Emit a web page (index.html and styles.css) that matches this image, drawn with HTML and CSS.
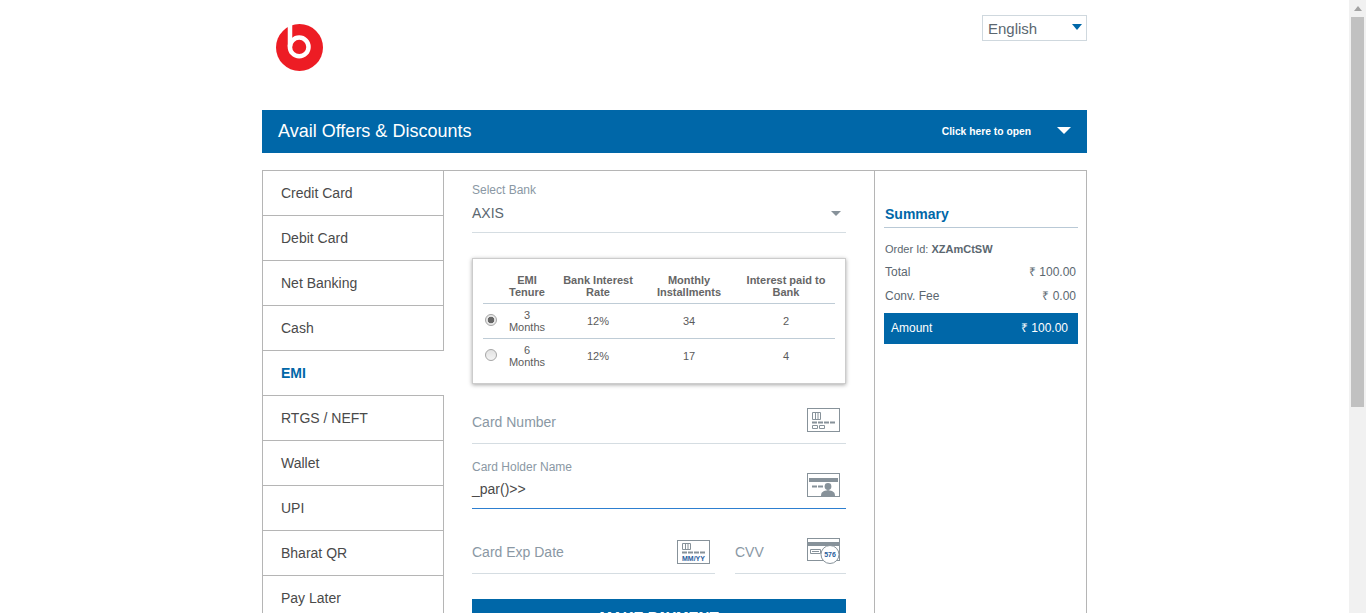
FILE: index.html
```html
<!DOCTYPE html>
<html lang="en">
<head>
  <meta charset="UTF-8">
  <title>Payment</title>
  <link rel="stylesheet" href="styles.css">
</head>
<body>
  <div class="page">
    <div class="main">
      <div class="container">

        <div class="top">
          <svg class="logo" width="47" height="47" viewBox="0 0 48 48">
            <circle cx="24" cy="24" r="24" fill="#ed1c24"/>
            <circle cx="23.7" cy="23.4" r="9.5" fill="none" stroke="#fff" stroke-width="4.6"/>
            <rect x="12" y="1" width="4.6" height="22" fill="#fff"/>
          </svg>
          <div class="lang">
            <span>English</span>
            <i class="caret"></i>
          </div>
        </div>

        <div class="offers">
          <h1>Avail Offers &amp; Discounts</h1>
          <div class="offers-right">
            <span>Click here to open</span>
            <i class="caret-white"></i>
          </div>
        </div>

        <div class="content">
          <ul class="tabs">
            <li>Credit Card</li>
            <li>Debit Card</li>
            <li>Net Banking</li>
            <li>Cash</li>
            <li class="active">EMI</li>
            <li>RTGS / NEFT</li>
            <li>Wallet</li>
            <li>UPI</li>
            <li>Bharat QR</li>
            <li>Pay Later</li>
          </ul>

          <div class="form">
            <div class="bank">
              <label>Select Bank</label>
              <div class="bank-value">
                <span>AXIS</span>
                <i class="caret-gray"></i>
              </div>
            </div>

            <div class="emi-box">
              <table class="emi">
                <thead>
                  <tr>
                    <th class="c-radio"></th>
                    <th class="c-tenure">EMI<br>Tenure</th>
                    <th class="c-rate">Bank Interest Rate</th>
                    <th class="c-month">Monthly Installments</th>
                    <th class="c-paid">Interest paid to Bank</th>
                  </tr>
                </thead>
                <tbody>
                  <tr>
                    <td><i class="radio checked"></i></td>
                    <td>3<br>Months</td>
                    <td>12%</td>
                    <td>34</td>
                    <td>2</td>
                  </tr>
                  <tr>
                    <td><i class="radio"></i></td>
                    <td>6<br>Months</td>
                    <td>12%</td>
                    <td>17</td>
                    <td>4</td>
                  </tr>
                </tbody>
              </table>
            </div>

            <div class="field field-number">
              <span class="placeholder">Card Number</span>
              <svg width="33" height="24" viewBox="0 0 33 24" fill="none">
                <rect x="0.5" y="0.5" width="32" height="23" stroke="#87929a"/>
                <path d="M5.5 4.5h8v7h-8zM8.5 4.5v7M11 4.5v7" stroke="#87929a"/>
                <path d="M5 14.5h5M11 14.5h5M17 14.5h5M23 14.5h5" stroke="#87929a" stroke-width="2"/>
                <path d="M5.5 17.5h5v3h-5zM12.5 17.5h5v3h-5z" stroke="#87929a"/>
              </svg>
            </div>

            <div class="field field-name">
              <label>Card Holder Name</label>
              <div class="field-row">
                <span class="value">_par()&gt;&gt;</span>
                <svg width="33" height="24" viewBox="0 0 33 24" fill="none">
                  <rect x="0.5" y="0.5" width="32" height="23" stroke="#87929a"/>
                  <rect x="2" y="5" width="29" height="4" fill="#87929a"/>
                  <path d="M5 13.5h5M11 13.5h5" stroke="#87929a" stroke-width="2"/>
                  <circle cx="21" cy="13.5" r="3.4" fill="#87929a"/>
                  <path d="M14 23c0-4 2-5 7-6 5 1 7 2 7 6z" fill="#87929a"/>
                </svg>
              </div>
            </div>

            <div class="split">
              <div class="field field-exp">
                <span class="placeholder">Card Exp Date</span>
                <svg width="33" height="24" viewBox="0 0 33 24" fill="none">
                  <rect x="0.5" y="0.5" width="32" height="23" stroke="#87929a"/>
                  <path d="M5.5 3.5h8v6h-8zM8.5 3.5v6M11 3.5v6" stroke="#87929a"/>
                  <path d="M5 12.5h5M11 12.5h5M17 12.5h5M23 12.5h5" stroke="#87929a" stroke-width="2"/>
                  <text x="16.5" y="21" class="icon-text" text-anchor="middle">MM/YY</text>
                </svg>
              </div>
              <div class="field field-cvv">
                <span class="placeholder">CVV</span>
                <svg width="33" height="26" viewBox="0 0 33 26" fill="none">
                  <rect x="0.5" y="0.5" width="32" height="22" stroke="#87929a"/>
                  <rect x="1" y="4" width="31" height="4" fill="#87929a"/>
                  <path d="M3.5 11.5h10v4h-10zM5 13.5h7" stroke="#87929a"/>
                  <circle cx="23" cy="16.5" r="9" fill="#fff" stroke="#87929a"/>
                  <text x="23" y="19" class="icon-text" text-anchor="middle">576</text>
                </svg>
              </div>
            </div>

            <button class="pay">MAKE PAYMENT</button>
          </div>

          <div class="summary">
            <h2>Summary</h2>
            <div class="order">Order Id: <b>XZAmCtSW</b></div>
            <div class="line"><span>Total</span><span>₹ 100.00</span></div>
            <div class="line"><span>Conv. Fee</span><span>₹ 0.00</span></div>
            <div class="amount"><span>Amount</span><span>₹ 100.00</span></div>
          </div>
        </div>

      </div>
    </div>

    <div class="scrollbar">
      <i class="scroll-arrow"></i>
      <div class="scroll-thumb"></div>
    </div>
  </div>
</body>
</html>
```

FILE: styles.css
```css
* {
  box-sizing: border-box;
}
html, body {
  margin: 0;
  padding: 0;
  height: 100%;
  overflow: hidden;
}
body {
  background: #fff;
  color: #4a4a4a;
  font-family: "Liberation Sans", Arial, sans-serif;
}
.page {
  display: flex;
  height: 613px;
  overflow: hidden;
}
.main {
  flex: 1;
  min-width: 0;
}
.container {
  width: 825px;
  margin: 0 auto;
}

/* top bar */
.top {
  height: 110px;
  display: flex;
  justify-content: space-between;
  align-items: flex-start;
  padding-left: 14px;
}
.logo {
  margin-top: 24px;
}
.lang {
  width: 105px;
  height: 26px;
  margin-top: 15px;
  border: 1px solid #cfd8de;
  padding: 0 4px 0 5px;
  display: flex;
  justify-content: space-between;
  align-items: center;
  font-size: 15px;
  line-height: 17px;
  color: #5b6770;
}
.lang span {
  padding-top: 1px;
}
.caret {
  width: 0;
  height: 0;
  margin-bottom: 3px;
  border-left: 5px solid transparent;
  border-right: 5px solid transparent;
  border-top: 6px solid #0067a8;
}

/* offers banner */
.offers {
  height: 43px;
  background-color: #0067a8;
  color: #fff;
  display: flex;
  justify-content: space-between;
  align-items: center;
  padding: 0 16px;
}
.offers h1 {
  margin: 0;
  font-size: 18px;
  font-weight: normal;
}
.offers-right {
  display: flex;
  align-items: center;
  gap: 26px;
  font-size: 10.3px;
  font-weight: bold;
}
.offers-right span {
  margin-bottom: 1px;
}
.caret-white {
  width: 0;
  height: 0;
  border-left: 7px solid transparent;
  border-right: 7px solid transparent;
  border-top: 7px solid #fff;
  margin-bottom: 2px;
}

/* three columns */
.content {
  display: flex;
  margin-top: 17px;
  height: 600px;
}

.tabs {
  width: 182px;
  margin: 0;
  padding: 0;
  list-style: none;
  flex-shrink: 0;
}
.tabs li {
  height: 45px;
  line-height: 44px;
  padding-left: 18px;
  font-size: 14px;
  color: #4a4a4a;
  border: 1px solid #b5b5b5;
  border-bottom: none;
}
.tabs li.active {
  border-right: none;
  color: #0067a8;
  font-weight: bold;
}

.form {
  width: 430px;
  padding: 0 28px;
  flex-shrink: 0;
  border-top: 1px solid #b5b5b5;
}
.bank {
  height: 62px;
  padding-top: 12px;
  border-bottom: 1px solid #d5dde2;
}
label {
  display: block;
  font-size: 12px;
  color: #8a98a4;
}
.bank-value {
  display: flex;
  justify-content: space-between;
  align-items: center;
  margin-top: 8px;
  font-size: 14px;
  color: #5b6770;
}
.caret-gray {
  width: 0;
  height: 0;
  margin-right: 5px;
  border-left: 5px solid transparent;
  border-right: 5px solid transparent;
  border-top: 5px solid #87929a;
}

/* emi table */
.emi-box {
  height: 126px;
  margin-top: 25px;
  padding: 10px;
  border: 1px solid #ccc;
  box-shadow: 0 1px 4px rgba(0,0,0,0.35);
}
.emi {
  width: 352px;
  border-collapse: collapse;
  table-layout: fixed;
  font-size: 11px;
  color: #5b5b5b;
  text-align: center;
}
.emi th {
  height: 34px;
  padding: 0 0 5px;
  line-height: 12px;
  font-weight: bold;
  color: #666;
  vertical-align: bottom;
}
.emi thead tr {
  border-bottom: 1px solid #bfccd6;
}
.emi td {
  height: 35px;
  padding: 0;
  line-height: 12px;
}
.emi th:last-child,
.emi td:last-child {
  padding-left: 2px;
}
.emi tbody tr:first-child {
  border-bottom: 1px solid #bfccd6;
}
.c-radio { width: 18px; }
.c-tenure { width: 52px; }
.c-rate { width: 90px; }
.c-month { width: 92px; }
.c-paid { width: 100px; }
.radio {
  display: block;
  width: 12px;
  height: 12px;
  margin: -2px 0 0 2px;
  border-radius: 50%;
  border: 1px solid #a6a6a6;
  background: linear-gradient(#e2e2e2, #f4f4f4);
}
.radio.checked {
  background: radial-gradient(circle, #666 0, #666 3px, #e8e8e8 3.6px);
}

/* card fields */
.field {
  display: flex;
  justify-content: space-between;
  align-items: center;
  border-bottom: 1px solid #d5dde2;
}
.placeholder {
  font-size: 14px;
  color: #8a98a4;
}
.field-number {
  height: 60px;
  padding: 16px 6px 0 0;
}
.field-number svg {
  margin-bottom: 4px;
}
.field-name {
  display: block;
  height: 65px;
  padding-top: 16px;
  border-bottom-color: #2d7fd0;
}
.field-row {
  display: flex;
  justify-content: space-between;
  align-items: center;
  margin-top: -1px;
  padding-right: 6px;
}
.value {
  font-size: 14px;
  color: #4a4a4a;
  margin-top: 7px;
}
.split {
  display: flex;
  gap: 20px;
}
.field-exp {
  width: 243px;
  height: 65px;
  padding: 22px 5px 0 0;
}
.field-cvv {
  width: 111px;
  height: 65px;
  padding: 22px 6px 0 0;
}
.field-cvv svg {
  margin-bottom: 2px;
}
.icon-text {
  font-size: 7px;
  font-weight: bold;
  fill: #2a5d9c;
}
.pay {
  display: block;
  width: 100%;
  height: 35px;
  margin-top: 25px;
  padding: 0;
  border: none;
  background-color: #0067a8;
  color: #fff;
  font-family: inherit;
  font-size: 15px;
  font-weight: bold;
}

/* summary */
.summary {
  width: 213px;
  height: 100%;
  padding: 0 8px 0 9px;
  border-left: 1px solid #b5b5b5;
  border-right: 1px solid #b5b5b5;
  border-top: 1px solid #b5b5b5;
  flex-shrink: 0;
  font-size: 12px;
  line-height: 14px;
  color: #5b6770;
}
.summary h2 {
  margin: 35px 0 0;
  padding: 0 0 5px 1px;
  height: 22px;
  line-height: 16px;
  font-size: 14px;
  color: #0067a8;
  border-bottom: 1px solid #b9c9d6;
}
.order {
  margin-top: 14px;
  padding-left: 1px;
  font-size: 11px;
}
.line {
  display: flex;
  justify-content: space-between;
  padding: 0 2px 0 1px;
  margin-top: 9px;
}
.line + .line {
  margin-top: 10px;
}
.amount {
  height: 31px;
  margin-top: 10px;
  padding: 0 10px 2px 7px;
  display: flex;
  justify-content: space-between;
  align-items: center;
  background-color: #0067a8;
  color: #fff;
}

/* page scrollbar */
.scrollbar {
  width: 17px;
  flex-shrink: 0;
  background: #f1f1f1;
  padding: 0 2px;
}
.scroll-arrow {
  display: block;
  width: 0;
  height: 0;
  margin: 6px auto;
  border-left: 4px solid transparent;
  border-right: 4px solid transparent;
  border-bottom: 5px solid #a3a3a3;
}
.scroll-thumb {
  height: 390px;
  background: #c1c1c1;
}
```
